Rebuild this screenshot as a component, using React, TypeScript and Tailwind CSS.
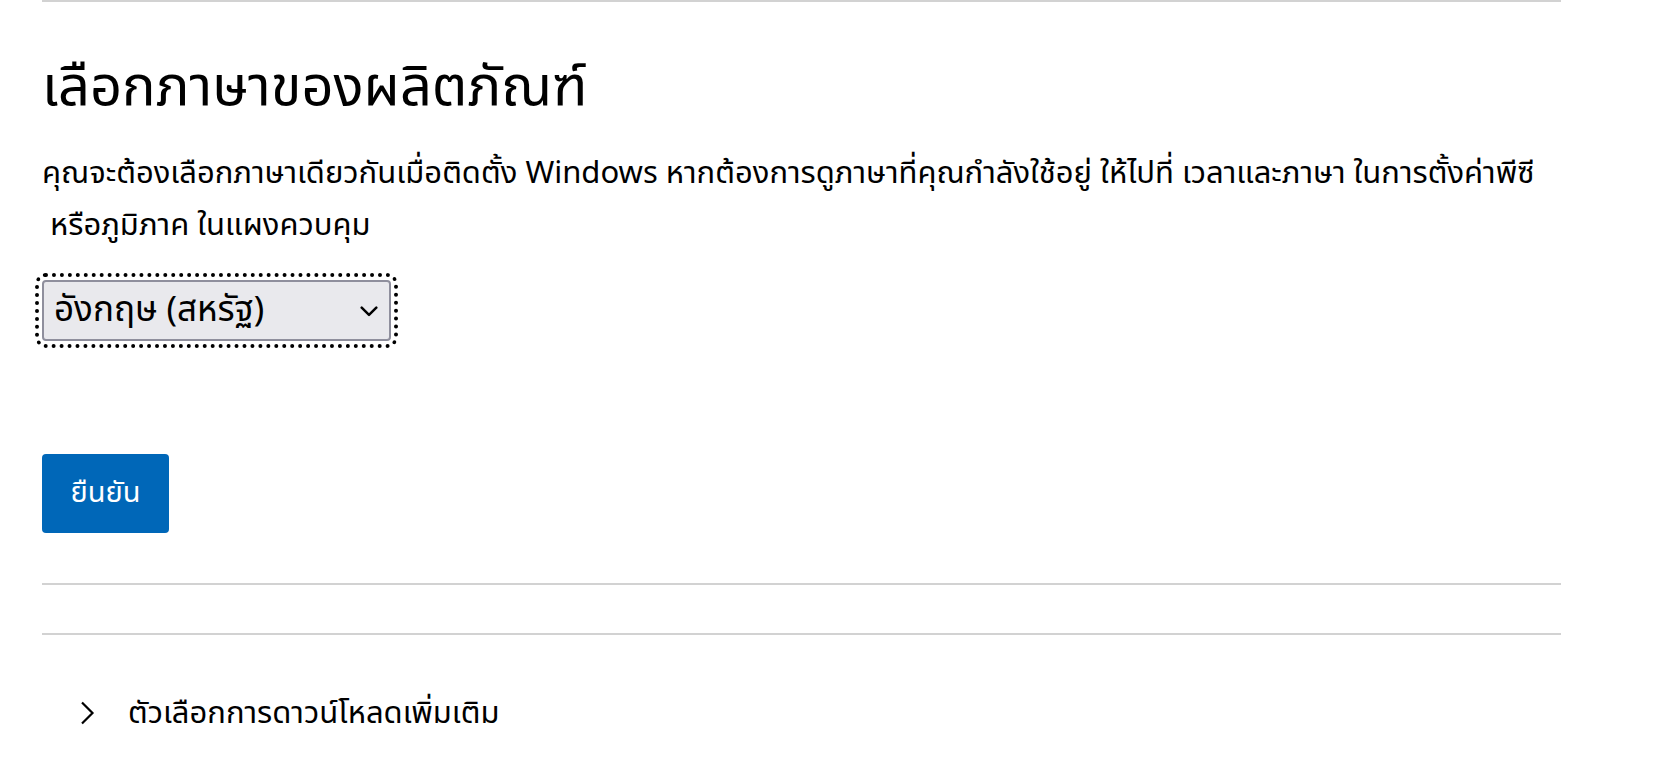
const Chevron = ({ className }: { className?: string }) => (
    <svg className={className} viewBox="0 0 16 16" fill="none" stroke="currentColor" strokeWidth={2.2} strokeLinecap="round" strokeLinejoin="round">
        <path d="M1.5 5 8 11.5 14.5 5" />
    </svg>
);

export default function App() {
    const font = "font-['Leelawadee_UI','Noto_Sans_Thai','Noto_Sans','DejaVu_Sans',sans-serif]";

    return (
        <div className={`min-h-screen bg-white text-black ${font}`}>
            <div className="ml-[42px] w-[1519px]">
                <section className="border-t-2 border-[#d2d2d2]">
                    <h2 className="mt-[60px] text-[56px] leading-[52px] font-normal">
                        เลือกภาษาของผลิตภัณฑ์
                    </h2>

                    <p className="mt-[34px] text-[31px] leading-[52px]">
                        คุณจะต้องเลือกภาษาเดียวกันเมื่อติดตั้ง Windows หากต้องการดูภาษาที่คุณกำลังใช้อยู่ ให้ไปที่ เวลาและภาษา ในการตั้งค่าพีซี
                        <br />
                        &nbsp;หรือภูมิภาค ในแผงควบคุม
                    </p>

                    <div className="mt-[28px] inline-block outline-[4px] outline-dotted outline-black outline-offset-[3px] rounded-[4px]">
                        <div className="flex h-[61px] w-[349px] items-center justify-between rounded-[4px] border-2 border-[#8f8f9d] bg-[#e9e9ed] pl-[10px] pr-[11px] text-[35px] leading-none">
                            <span>อังกฤษ (สหรัฐ)</span>
                            <Chevron className="h-[18px] w-[18px]" />
                        </div>
                    </div>

                    <div className="mt-[113px] mb-[50px]">
                        <button className="h-[79px] w-[127px] rounded-[4px] bg-[#0067b8] text-[29px] leading-none text-white">
                            ยืนยัน
                        </button>
                    </div>
                </section>

                <div className="border-t-2 border-[#d2d2d2]" />

                <section className="mt-[48px] border-t-2 border-[#d2d2d2]">
                    <div className="mt-[58px] flex h-[40px] items-center pl-[38px]">
                        <svg className="h-[24px] w-[15px]" viewBox="0 0 15 24" fill="none" stroke="currentColor" strokeWidth={2.2}>
                            <path d="M2 1.5 12.5 12 2 22.5" />
                        </svg>
                        <span className="ml-[33px] text-[31px] leading-none">ตัวเลือกการดาวน์โหลดเพิ่มเติม</span>
                    </div>
                </section>
            </div>
        </div>
    );
}
